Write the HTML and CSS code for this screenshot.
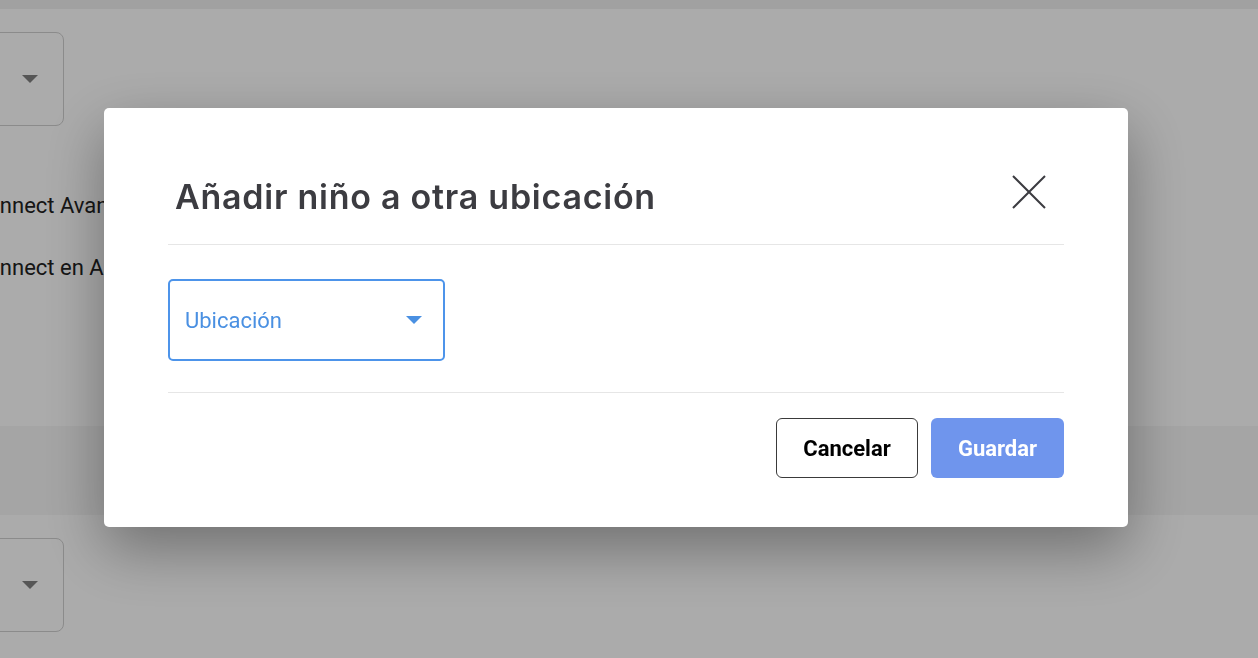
FILE: index.html
```html
<!DOCTYPE html>
<html lang="es">
<head>
  <meta charset="UTF-8" />
  <meta name="viewport" content="width=device-width, initial-scale=1" />
  <title>Añadir niño a otra ubicación</title>
  <link rel="stylesheet" href="styles.css">
</head>
<body>

  <div class="page">
    <div class="topbar"></div>
    <div class="page-select">
      <svg class="caret" width="16" height="8" viewBox="0 0 16 8"><path d="M0 0h16L8 8z" fill="#808080"/></svg>
    </div>
    <div class="page-lines">
      <div class="page-line">Connect Avanzado</div>
      <div class="page-line">Connect en Aula</div>
    </div>
    <div class="page-band"></div>
    <div class="page-select">
      <svg class="caret" width="16" height="8" viewBox="0 0 16 8"><path d="M0 0h16L8 8z" fill="#808080"/></svg>
    </div>
  </div>

  <div class="overlay">
    <div class="modal">
      <div class="modal-header">
        <h2 class="modal-title">Añadir niño a otra ubicación</h2>
        <button class="close-button" aria-label="Cerrar">
          <svg width="34" height="34" viewBox="0 0 34 34"><path d="M1 1L33 33M33 1L1 33" stroke="#3c3c41" stroke-width="2" fill="none"/></svg>
        </button>
      </div>
      <div class="modal-body">
        <div class="location-select">
          <span>Ubicación</span>
          <svg width="16" height="8" viewBox="0 0 16 8"><path d="M0 0h16L8 8z" fill="#4a90e2"/></svg>
        </div>
      </div>
      <div class="modal-footer">
        <button class="btn btn-cancel">Cancelar</button>
        <button class="btn btn-save">Guardar</button>
      </div>
    </div>
  </div>

</body>
</html>
```

FILE: styles.css
```css
html, body {
  margin: 0;
  padding: 0;
  height: 100%;
  overflow: hidden;
  background: white;
  font-family: Roboto, "Liberation Sans", sans-serif;
}
/* The page behind the dialog */
.page {
  height: 100%;
  display: flex;
  flex-direction: column;
}
.topbar {
  height: 9px;
  background: #f1f1f1;
}
.page-select {
  box-sizing: border-box;
  width: 160px;
  height: 94px;
  margin: 23px 0 0 -96px;
  border: 1px solid #d0d0d0;
  border-radius: 8px;
  display: flex;
  align-items: center;
  justify-content: flex-end;
  padding-right: 25px;
}
.page-lines {
  display: flex;
  flex-direction: column;
  gap: 36px;
  margin-top: 67px;
  margin-left: -27px;
  font-size: 22px;
  color: #222;
  line-height: 26px;
}
.page-band {
  height: 89px;
  margin-top: 145px;
  background: #f6f6f6;
}
.page-band + .page-select {
  margin-top: 23px;
}
/* Dialog */
.overlay {
  position: fixed;
  inset: 0;
  background: rgba(0, 0, 0, 0.33);
  display: flex;
  justify-content: flex-start;
  align-items: flex-start;
  padding: 108px 0 0 104px;
}
.modal {
  width: 1024px;
  box-sizing: border-box;
  padding: 0 64px;
  background: white;
  border-radius: 5px;
  box-shadow: 0 22px 60px rgba(0, 0, 0, 0.35);
}
.modal-header {
  display: flex;
  justify-content: space-between;
  align-items: flex-start;
  padding: 68px 18px 26px 7px;
  border-bottom: 1px solid #e6e6e6;
}
.modal-title {
  margin: 0;
  font-family: Inter, "Open Sans", sans-serif;
  font-weight: 600;
  font-size: 34px;
  letter-spacing: 0.75px;
  line-height: 42px;
  color: #3c3c41;
}
.close-button {
  background: none;
  border: none;
  padding: 0;
  margin-top: -1px;
  width: 34px;
  height: 34px;
  cursor: pointer;
}
.modal-body {
  padding: 34px 0 31px;
  border-bottom: 1px solid #e6e6e6;
}
.location-select {
  box-sizing: border-box;
  width: 277px;
  height: 82px;
  border: 2px solid #4d94ea;
  border-radius: 5px;
  display: flex;
  align-items: center;
  justify-content: space-between;
  padding: 0 21px 0 15px;
  font-size: 22px;
  color: #4a90e2;
}
.modal-footer {
  display: flex;
  justify-content: flex-end;
  gap: 13px;
  padding: 25px 0 49px;
}
.btn {
  height: 60px;
  border-radius: 6px;
  font-family: Roboto, "Liberation Sans", sans-serif;
  font-size: 22px;
  font-weight: 700;
  cursor: pointer;
}
.btn-cancel {
  width: 142px;
  background: white;
  color: black;
  border: 1px solid #3a3a3a;
}
.btn-save {
  width: 133px;
  background: #6f95ed;
  color: white;
  border: none;
}
```
